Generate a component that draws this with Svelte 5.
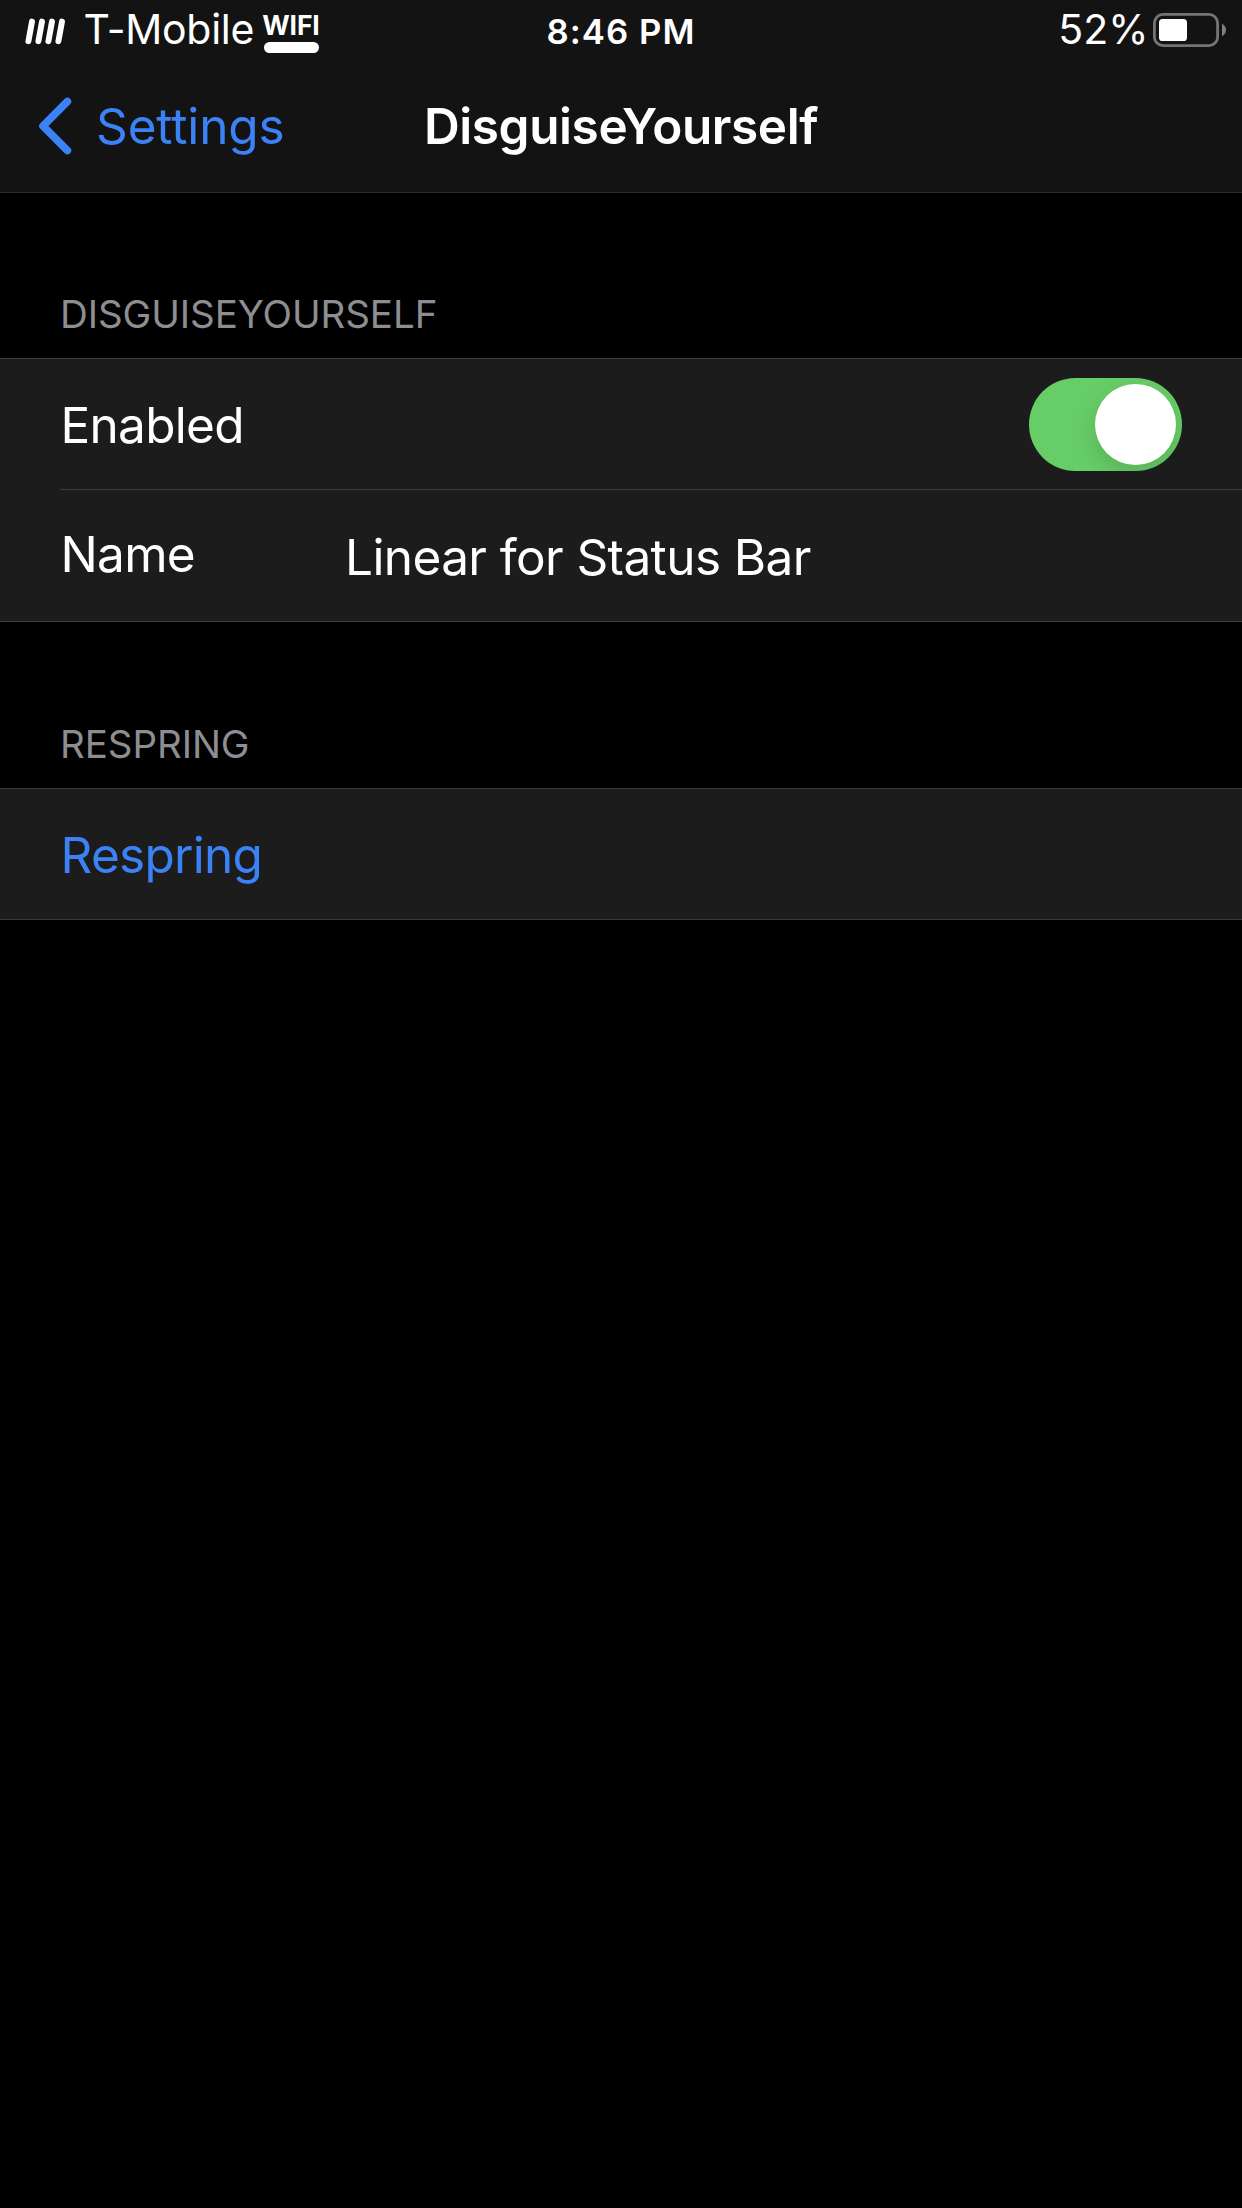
<script>
  let enabled = $state(true);
  let name = $state('Linear for Status Bar');
  const bars = [0, 10, 20, 30];
</script>

<div class="screen">
  <header>
    <div class="status">
      <div class="left">
        <svg class="signal" width="44" height="28" viewBox="0 0 44 28" aria-hidden="true">
          {#each bars as x}
            <line x1={8 + x} y1="4.6" x2={4.4 + x} y2="24.2" />
          {/each}
        </svg>
        <span class="carrier">T-Mobile</span>
        <div class="wifi">
          <span>WIFI</span>
          <i></i>
        </div>
      </div>
      <time>8:46 PM</time>
      <div class="right">
        <span class="percent">52%</span>
        <svg class="battery" width="74" height="34" viewBox="0 0 74 34" aria-hidden="true">
          <rect class="case" x="1.4" y="1.4" width="63.2" height="31.2" rx="8.6" />
          <rect class="charge" x="6" y="6" width="28" height="22" rx="3.6" />
          <path class="tip" d="M69 10.8Q73 13.2 73 17T69 23.2Z" />
        </svg>
      </div>
    </div>
    <nav>
      <button class="back">
        <svg width="34" height="58" viewBox="0 0 34 58" aria-hidden="true">
          <path d="M29.4 4.5L5 29L29.4 53.5" />
        </svg>
        <span>Settings</span>
      </button>
      <h1>DisguiseYourself</h1>
    </nav>
  </header>

  <section class="first">
    <h2>DISGUISEYOURSELF</h2>
    <div class="group">
      <div class="cell">
        <span class="label">Enabled</span>
        <button
          class="switch"
          class:on={enabled}
          role="switch"
          aria-checked={enabled}
          aria-label="Enabled"
          onclick={() => (enabled = !enabled)}
        ><i></i></button>
      </div>
      <div class="divider"></div>
      <label class="cell field">
        <span>Name</span>
        <input bind:value={name} />
      </label>
    </div>
  </section>

  <section>
    <h2>RESPRING</h2>
    <div class="group">
      <button class="cell action"><span class="label">Respring</span></button>
    </div>
  </section>
</div>

<style>
  :global(body) {
    background: #000;
  }
  .screen {
    width: 1242px;
    min-height: 2208px;
    background: #000;
    color: #fff;
    font: 400 49.5px/60px Inter, 'Liberation Sans', sans-serif;
    letter-spacing: -0.72px;
  }
  button,
  input {
    margin: 0;
    padding: 0;
    border: 0;
    background: none;
    color: inherit;
    font: inherit;
    letter-spacing: inherit;
    outline: none;
  }
  header {
    box-sizing: border-box;
    height: 193px;
    background: #131313;
    border-bottom: 1px solid #2a2a2b;
  }
  .status {
    display: grid;
    grid-template-columns: 1fr auto 1fr;
    height: 60px;
  }
  .left,
  .right {
    display: flex;
    align-items: flex-start;
  }
  .left {
    padding-left: 24px;
  }
  .signal {
    margin-top: 16.5px;
  }
  .signal line {
    stroke: #fff;
    stroke-width: 5.9;
    stroke-linecap: round;
  }
  .carrier,
  .percent {
    font-size: 41px;
    line-height: 58px;
  }
  .carrier {
    margin-left: 15.5px;
    letter-spacing: -0.27px;
  }
  .wifi {
    display: grid;
    margin: 9px 0 0 8px;
  }
  .wifi span {
    font-size: 26.5px;
    font-weight: 700;
    line-height: 32px;
    letter-spacing: -0.1px;
  }
  .wifi i {
    width: 55px;
    height: 11px;
    margin: 1px 0 0 2px;
    border-radius: 5.5px;
    background: #fff;
  }
  time {
    font-size: 34.7px;
    font-weight: 600;
    line-height: 62px;
    letter-spacing: 1.05px;
  }
  .right {
    justify-content: flex-end;
    padding-right: 15px;
  }
  .percent {
    letter-spacing: 0;
  }
  .battery {
    margin: 13px 0 0 4.5px;
  }
  .case {
    fill: none;
    stroke: #757575;
    stroke-width: 2.8;
  }
  .charge {
    fill: #fff;
  }
  .tip {
    fill: #808080;
  }
  nav {
    display: grid;
    grid-template-columns: 1fr auto 1fr;
    align-items: center;
    height: 132px;
  }
  .back {
    display: flex;
    align-items: center;
    padding-left: 38px;
    color: #3b82f7;
    letter-spacing: -0.13px;
  }
  .back svg {
    margin-right: 24px;
  }
  .back path {
    fill: none;
    stroke: #3b82f7;
    stroke-width: 7.6;
    stroke-linecap: round;
    stroke-linejoin: round;
  }
  h1 {
    margin: 0;
    font-size: 49.5px;
    font-weight: 600;
    letter-spacing: -0.4px;
  }
  section {
    padding-top: 91px;
  }
  .first {
    padding-top: 90px;
  }
  h2 {
    margin: 0;
    padding: 1px 60px 14px;
    color: #8d8d92;
    font-size: 38.5px;
    font-weight: 400;
    letter-spacing: -0.07px;
  }
  .group {
    background: #1c1c1c;
    border: solid #3b3b3c;
    border-width: 1px 0;
  }
  .cell {
    display: flex;
    box-sizing: border-box;
    align-items: center;
    justify-content: space-between;
    width: 100%;
    height: 131px;
    padding: 0 60px;
  }
  .cell:first-child {
    height: 130px;
  }
  .label {
    padding: 2px 0 0 0.5px;
  }
  .divider {
    height: 1px;
    margin-left: 60px;
    background: #3b3b3c;
  }
  .field {
    justify-content: flex-start;
  }
  .field span {
    width: 284.5px;
    padding: 0 0 3px 0.5px;
  }
  .field input {
    flex: 1;
    padding-top: 3px;
    letter-spacing: -0.6px;
  }
  .action {
    color: #3b82f7;
  }
  .switch {
    width: 153px;
    height: 93px;
    padding: 6px;
    border-radius: 46.5px;
    background: #39393d;
    overflow: hidden;
  }
  .switch i {
    display: block;
    width: 81px;
    height: 81px;
    border-radius: 50%;
    background: #fff;
    box-shadow: 0 9px 24px rgb(0 0 0 / 0.15);
  }
  .switch.on {
    background: #67ce67;
  }
  .switch.on i {
    margin-left: auto;
  }
</style>
